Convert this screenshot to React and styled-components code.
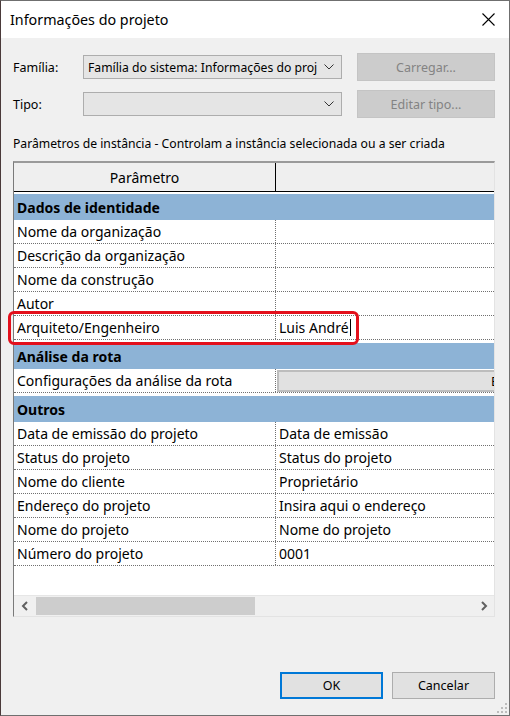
import React from "react";
import styled, { createGlobalStyle } from "styled-components";

const GlobalStyle = createGlobalStyle`
  html, body {
    margin: 0;
    padding: 0;
    background: #3a2b2b;
  }
  * {
    box-sizing: border-box;
  }
`;

const FONT = `"Noto Sans", "Liberation Sans", sans-serif`;

const Window = styled.div`
  width: 510px;
  height: 716px;
  display: flex;
  flex-direction: column;
  border: 1px solid #6f6f6f;
  border-left-color: #4a3a3a;
  background: #f0f0f0;
  font-family: ${FONT};
  color: #000;
  position: relative;
`;

const TitleBar = styled.div`
  height: 37px;
  background: #fff;
  display: flex;
  align-items: center;
  justify-content: space-between;
  padding: 0 14px 0 9px;
  font-size: 14.3px;
`;

const Body = styled.div`
  flex: 1;
  display: flex;
  flex-direction: column;
  padding: 15px 14px 16px 12px;
  position: relative;
`;

const FieldRow = styled.div`
  display: flex;
  align-items: center;
  height: 28px;
  margin-bottom: ${(p) => p.$gap || 0}px;
`;

const Label = styled.div`
  width: 70px;
  font-size: 12.5px;
`;

const Combo = styled.div`
  width: 259px;
  height: 24px;
  border: 1px solid #adadad;
  background: #e5e5e5;
  display: flex;
  align-items: center;
  justify-content: space-between;
  padding: 0 7px 0 4px;
  font-size: 12.2px;
  white-space: nowrap;
  overflow: hidden;
`;

const GreyButton = styled.div`
  margin-left: 15px;
  width: 138px;
  height: 28px;
  background: #cccccc;
  border: 1px solid #c4c4c4;
  color: #838383;
  font-size: 12.5px;
  display: flex;
  align-items: center;
  justify-content: center;
`;

const Caption = styled.div`
  margin-top: 17px;
  font-size: 12.2px;
  height: 18px;
  line-height: 18px;
`;

const Grid = styled.div`
  margin-top: 8px;
  width: 482px;
  height: 456px;
  display: flex;
  flex-direction: column;
  border-top: 2px solid #9a9a9a;
  border-left: 1px solid #7a7a7a;
  border-right: 1px solid #e3e3e3;
  border-bottom: 1px solid #e3e3e3;
  background: #fff;
  position: relative;
`;

const HeaderRow = styled.div`
  display: grid;
  grid-template-columns: 262px 1fr;
  height: 29px;
  background: #efefef;
  border-bottom: 1px solid #000;
  font-size: 14px;
`;

const HeaderCell = styled.div`
  display: flex;
  align-items: center;
  justify-content: center;
  border-right: ${(p) => (p.$divider ? "1px solid #000" : "none")};
`;

const Rows = styled.div`
  flex: 1;
  display: flex;
  flex-direction: column;
  padding-top: 2px;
`;

const GroupRow = styled.div`
  height: 26px;
  background: #8db3d6;
  font-weight: 700;
  font-size: 14px;
  display: flex;
  align-items: center;
  padding-left: 3px;
  margin-top: ${(p) => (p.$first ? 0 : 3)}px;
`;

const DataRow = styled.div`
  display: grid;
  grid-template-columns: 262px 1fr;
  height: 24px;
  border-bottom: 1px dotted #707070;
  font-size: 14px;
  position: relative;
`;

const Cell = styled.div`
  display: flex;
  align-items: center;
  padding-left: 3px;
  white-space: nowrap;
  overflow: hidden;
  border-right: ${(p) => (p.$divider ? "1px dotted #707070" : "none")};
`;

/* wide button, only its left part is visible before the grid edge */
const ValueButton = styled.div`
  margin-left: -2px;
  flex: none;
  width: 478px;
  height: 22px;
  background: #e1e1e1;
  border: 2px solid #bdbdbd;
  border-right: none;
  display: flex;
  align-items: center;
  padding-left: 212px;
  font-size: 13px;
`;

const Caret = styled.span`
  display: inline-block;
  width: 1px;
  height: 17px;
  background: #000;
  margin-left: 1px;
`;

const Highlight = styled.div`
  position: absolute;
  left: -6px;
  top: -5px;
  width: 351px;
  height: 34px;
  border: 3px solid #e3101c;
  border-radius: 6px;
  pointer-events: none;
`;

const ScrollBar = styled.div`
  height: 21px;
  background: #f0f0f0;
  display: flex;
  align-items: center;
  border-top: 1px solid #e6e6e6;
`;

const ScrollArrow = styled.div`
  width: 21px;
  height: 20px;
  display: flex;
  align-items: center;
  justify-content: center;
`;

const Track = styled.div`
  flex: 1;
  height: 18px;
  display: flex;
`;

const Thumb = styled.div`
  margin-left: 1px;
  height: 100%;
  background: #cdcdcd;
`;

const Footer = styled.div`
  margin-top: auto;
  display: flex;
  justify-content: flex-end;
  gap: 9px;
`;

const DialogButton = styled.div`
  width: 103px;
  height: 27px;
  background: #e1e1e1;
  border: ${(p) => (p.$default ? "2px solid #0078d7" : "1px solid #adadad")};
  font-size: 12.5px;
  display: flex;
  align-items: center;
  justify-content: center;
`;

const Grip = styled.svg`
  position: absolute;
  right: 2px;
  bottom: 2px;
`;

const Chevron = () => (
  <svg width="10" height="6" viewBox="0 0 10 6">
    <path d="M0.5 0.5 L5 5 L9.5 0.5" fill="none" stroke="#333" strokeWidth="1" />
  </svg>
);

const CloseIcon = () => (
  <svg width="13" height="13" viewBox="0 0 13 13">
    <path d="M0.5 0.5 L12.5 12.5 M12.5 0.5 L0.5 12.5" stroke="#000" strokeWidth="1.1" />
  </svg>
);

const ArrowLeft = () => (
  <svg width="8" height="10" viewBox="0 0 8 10">
    <path d="M6 1 L2 5 L6 9" fill="none" stroke="#606060" strokeWidth="2" />
  </svg>
);

const ArrowRight = () => (
  <svg width="8" height="10" viewBox="0 0 8 10">
    <path d="M2 1 L6 5 L2 9" fill="none" stroke="#606060" strokeWidth="2" />
  </svg>
);

const groups = [
  {
    title: "Dados de identidade",
    rows: [
      ["Nome da organização", ""],
      ["Descrição da organização", ""],
      ["Nome da construção", ""],
      ["Autor", ""],
      ["Arquiteto/Engenheiro", "Luis André", "edit"],
    ],
  },
  {
    title: "Análise da rota",
    rows: [["Configurações da análise da rota", "Editar...", "button"]],
  },
  {
    title: "Outros",
    rows: [
      ["Data de emissão do projeto", "Data de emissão"],
      ["Status do projeto", "Status do projeto"],
      ["Nome do cliente", "Proprietário"],
      ["Endereço do projeto", "Insira aqui o endereço"],
      ["Nome do projeto", "Nome do projeto"],
      ["Número do projeto", "0001"],
    ],
  },
];

const ValueCell = ({ value, kind }) => {
  if (kind === "button") {
    return (
      <Cell>
        <ValueButton>{value}</ValueButton>
      </Cell>
    );
  }
  return (
    <Cell>
      {value}
      {kind === "edit" && <Caret />}
    </Cell>
  );
};

export default function App() {
  return (
    <Window>
      <GlobalStyle />
      <TitleBar>
        <span>Informações do projeto</span>
        <CloseIcon />
      </TitleBar>
      <Body>
        <FieldRow $gap={9}>
          <Label>Família:</Label>
          <Combo>
            <span>Família do sistema: Informações do proj</span>
            <Chevron />
          </Combo>
          <GreyButton>Carregar...</GreyButton>
        </FieldRow>
        <FieldRow>
          <Label>Tipo:</Label>
          <Combo>
            <span />
            <Chevron />
          </Combo>
          <GreyButton>Editar tipo...</GreyButton>
        </FieldRow>

        <Caption>Parâmetros de instância - Controlam a instância selecionada ou a ser criada</Caption>

        <Grid>
          <HeaderRow>
            <HeaderCell $divider>Parâmetro</HeaderCell>
            <HeaderCell />
          </HeaderRow>
          <Rows>
            {groups.map((g, gi) => (
              <React.Fragment key={g.title}>
                <GroupRow $first={gi === 0}>{g.title}</GroupRow>
                {g.rows.map(([name, value, kind]) => (
                  <DataRow key={name}>
                    <Cell $divider>{name}</Cell>
                    <ValueCell value={value} kind={kind} />
                    {kind === "edit" && <Highlight />}
                  </DataRow>
                ))}
              </React.Fragment>
            ))}
          </Rows>
          <ScrollBar>
            <ScrollArrow>
              <ArrowLeft />
            </ScrollArrow>
            <Track>
              <Thumb style={{ width: 219 }} />
            </Track>
            <ScrollArrow>
              <ArrowRight />
            </ScrollArrow>
          </ScrollBar>
        </Grid>

        <Footer>
          <DialogButton $default>OK</DialogButton>
          <DialogButton>Cancelar</DialogButton>
        </Footer>
        <Grip width="10" height="10" viewBox="0 0 10 10">
          {[
            [8, 0],
            [8, 4],
            [4, 4],
            [8, 8],
            [4, 8],
            [0, 8],
          ].map(([x, y]) => (
            <rect key={`${x}-${y}`} x={x} y={y} width="2" height="2" fill="#bcbcbc" />
          ))}
        </Grip>
      </Body>
    </Window>
  );
}
